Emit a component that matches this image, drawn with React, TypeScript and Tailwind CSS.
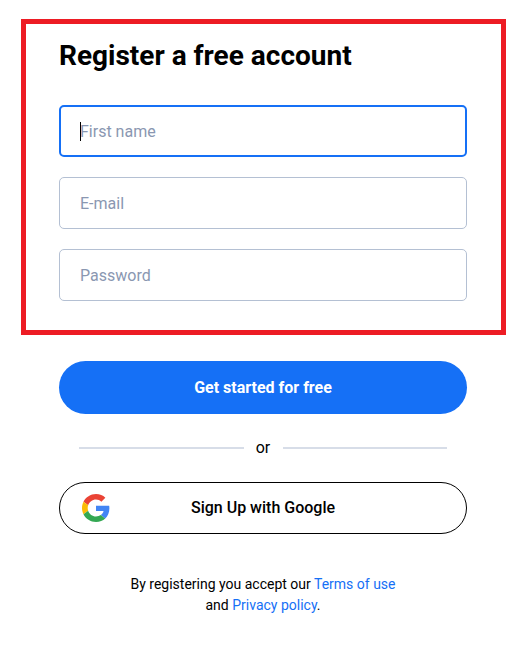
import React from "react";

function GoogleG() {
  return (
    <svg width="28" height="28" viewBox="0 0 48 48" aria-hidden="true">
      <path fill="#EA4335" d="M24 9.5c3.54 0 6.71 1.22 9.21 3.6l6.85-6.85C35.9 2.38 30.47 0 24 0 14.62 0 6.51 5.38 2.56 13.22l7.98 6.19C12.43 13.72 17.74 9.5 24 9.5z" />
      <path fill="#4285F4" d="M46.98 24.55c0-1.57-.15-3.09-.38-4.55H24v9.02h12.94c-.58 2.96-2.26 5.48-4.78 7.18l7.73 6c4.51-4.18 7.09-10.36 7.09-17.65z" />
      <path fill="#FBBC05" d="M10.53 28.59c-.48-1.45-.76-2.99-.76-4.59s.27-3.14.76-4.59l-7.98-6.19C.92 16.46 0 20.12 0 24c0 3.88.92 7.54 2.56 10.78l7.97-6.19z" />
      <path fill="#34A853" d="M24 48c6.48 0 11.93-2.13 15.89-5.81l-7.73-6c-2.15 1.45-4.92 2.3-8.16 2.3-6.26 0-11.57-4.22-13.47-9.91l-7.98 6.19C6.51 42.62 14.62 48 24 48z" />
    </svg>
  );
}

function Field({ placeholder, focused, type = "text" }: { placeholder: string; focused?: boolean; type?: string }) {
  return (
    <div className="relative">
      <input
        type={type}
        placeholder={placeholder}
        className={
          "block h-[52px] w-full rounded-[5px] bg-white pr-4 text-base text-black outline-none placeholder:text-[#8a97b1] " +
          (focused ? "border-2 border-[#1570f6] pl-[19px]" : "border border-[#b4c0d3] pl-5")
        }
      />
      {focused && <div className="absolute left-[21px] top-[17px] h-[19px] w-px bg-black" />}
    </div>
  );
}

export default function App() {
  return (
    <div className="h-[669px] w-[527px] overflow-hidden bg-white pt-[19px] font-['Roboto',sans-serif] text-black">
      <div className="ml-[21px] h-[316px] w-[485px] border-[5px] border-[#ed1c24] pl-[33px] pr-[34px]">
        <h1 className="mt-3 text-[28px] font-bold leading-[40px]">Register a free account</h1>
        <div className="mt-[29px] flex flex-col gap-5">
          <Field placeholder="First name" focused />
          <Field placeholder="E-mail" />
          <Field placeholder="Password" type="password" />
        </div>
      </div>

      <div className="ml-[59px] w-[408px]">
        <button className="mt-[26px] block h-[53px] w-full rounded-full bg-[#1570f6] text-base font-bold text-white">
          Get started for free
        </button>

        <div className="mt-[23px] flex h-[22px] items-center gap-[12px] px-5">
          <div className="h-0.5 flex-1 bg-[#d7dde8]" />
          <span className="w-[15px] text-center text-base leading-[22px]">or</span>
          <div className="h-0.5 flex-1 bg-[#d7dde8]" />
        </div>

        <button className="relative mt-[23px] flex h-[52px] w-full items-center justify-center rounded-full border border-black bg-white text-base font-medium">
          <span className="absolute left-[22px] top-[11px]">
            <GoogleG />
          </span>
          Sign Up with Google
        </button>

        <p className="mt-10 text-center text-sm leading-[21px]">
          By registering you accept our <a className="text-[#1570f6]">Terms of use</a>
          <br />
          and <a className="text-[#1570f6]">Privacy policy</a>.
        </p>
      </div>
    </div>
  );
}
